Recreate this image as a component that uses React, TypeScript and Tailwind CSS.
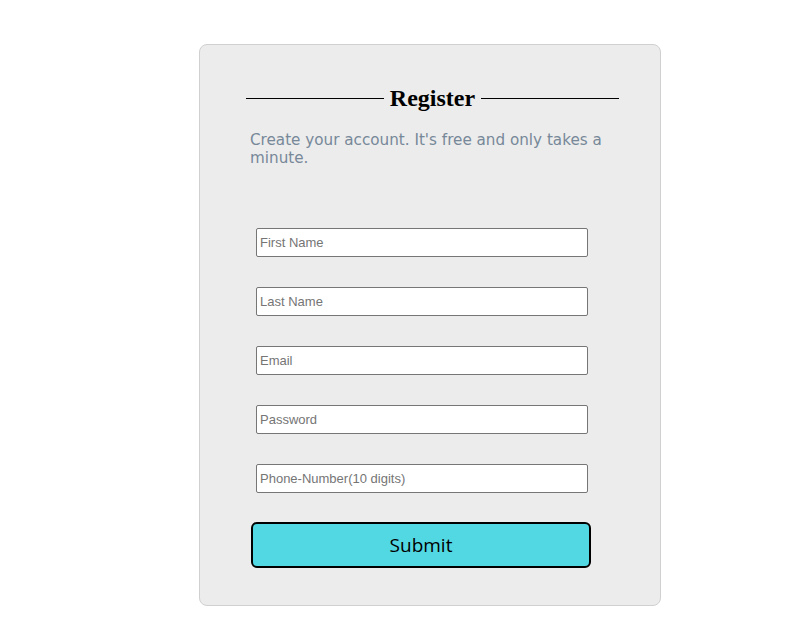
import React from "react";

export default function App() {
  const fields = ["First Name", "Last Name", "Email", "Password", "Phone-Number(10 digits)"];
  return (
    <div className="min-h-[641px] w-full bg-white pt-[44px] pl-[199px]">
      <div className="w-[462px] h-[562px] rounded-[8px] border border-[#d0d0d0] bg-[#ececec] pt-[38px]">
        <div className="ml-[46px] flex w-[373px] items-center">
          <div className="h-px flex-1 bg-black" />
          <h1 className="px-[6px] text-[24px] font-bold leading-[30px] text-black" style={{ fontFamily: '"Liberation Serif", "Times New Roman", serif' }}>
            Register
          </h1>
          <div className="h-px flex-1 bg-black" />
        </div>
        <p className="ml-[50px] mt-[18px] w-[370px] text-[15.2px] leading-[18px] text-[#778899]" style={{ fontFamily: '"DejaVu Sans", Verdana, sans-serif' }}>
          Create your account. It's free and only takes a minute.
        </p>
        <form className="mt-[61px] flex flex-col" onSubmit={(e) => e.preventDefault()}>
          {fields.map((f) => (
            <input
              key={f}
              type="text"
              placeholder={f}
              className="mb-[30px] ml-[56px] box-border h-[29px] w-[332px] rounded-[2px] border border-[#767676] bg-white px-[3px] text-[13px] text-black placeholder:text-[#757575] outline-none"
              style={{ fontFamily: '"Liberation Sans", Arial, sans-serif' }}
            />
          ))}
          <button
            type="submit"
            className="-mt-[1px] ml-[51px] box-border h-[46px] w-[340px] rounded-[6px] border-2 border-black bg-[#52d8e2] text-[19px] text-black"
            style={{ fontFamily: '"Open Sans", "Noto Sans", sans-serif' }}
          >
            Submit
          </button>
        </form>
      </div>
    </div>
  );
}
